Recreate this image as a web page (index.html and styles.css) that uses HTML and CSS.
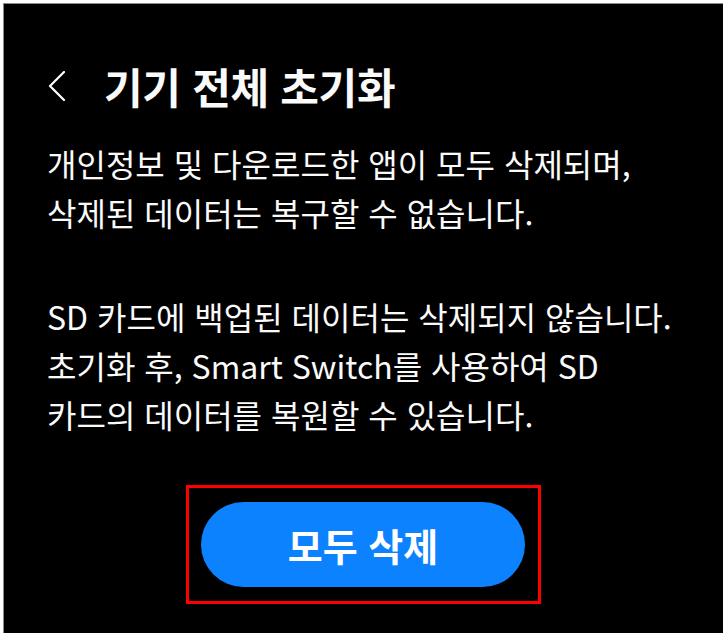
FILE: index.html
```html
<!DOCTYPE html>
<html lang="ko">
<head>
<meta charset="utf-8">
<title>기기 전체 초기화</title>
<link rel="stylesheet" href="styles.css">
</head>
<body>
<div class="screen">
  <header class="header">
    <span class="back" aria-label="뒤로">
      <svg width="18" height="30" viewBox="0 0 18 30"><path d="M16 1 L2 15 L16 29" fill="none" stroke="#fff" stroke-width="2.2" stroke-linecap="round" stroke-linejoin="round"/></svg>
    </span>
    <h1 class="title">기기 전체 초기화</h1>
  </header>
  <main class="content">
    <p class="para">개인정보 및 다운로드한 앱이 모두 삭제되며,<br>삭제된 데이터는 복구할 수 없습니다.</p>
    <p class="para">SD 카드에 백업된 데이터는 삭제되지 않습니다.<br>초기화 후, Smart Switch를 사용하여 SD<br>카드의 데이터를 복원할 수 있습니다.</p>
    <div class="actions">
      <div class="highlight">
        <button class="btn">모두 삭제</button>
      </div>
    </div>
  </main>
</div>
</body>
</html>
```
FILE: styles.css
```css
html, body {
  margin: 0;
  padding: 0;
  background: #ffffff;
}
body {
  font-family: "Noto Sans CJK KR", "Noto Sans", sans-serif;
  color: #fafafa;
}
.screen {
  margin: 3px 3px 0 3px;
  height: 630px;
  box-sizing: border-box;
  background: #000000;
  border-top: 1px solid #8a8a8a;
  border-left: 1px solid #8a8a8a;
  display: flex;
  flex-direction: column;
}
.header {
  display: flex;
  align-items: center;
  height: 60px;
  margin-top: 52px;
  padding-left: 44px;
}
.back {
  display: flex;
  width: 18px;
  height: 30px;
}
.title {
  margin: 0 0 0 38px;
  font-size: 42px;
  font-weight: 700;
  letter-spacing: -0.3px;
  line-height: 60px;
}
.content {
  padding: 23px 0 0 43px;
  display: flex;
  flex-direction: column;
}
.para {
  margin: 0;
  font-size: 32px;
  line-height: 49px;
  letter-spacing: 0;
}
.para + .para {
  margin-top: 55px;
}
.actions {
  display: flex;
  justify-content: center;
  padding-right: 43px;
  margin-top: 46px;
}
.highlight {
  border: 3px solid #ff0000;
  padding: 14px 13px 14px 12px;
  display: flex;
}
.btn {
  width: 324px;
  height: 85px;
  border: none;
  border-radius: 43px;
  background: #0c82fe;
  color: #ffffff;
  font-family: "Noto Sans CJK KR", "Noto Sans", sans-serif;
  font-size: 38px;
  font-weight: 700;
  letter-spacing: 0;
  padding: 0;
}
```
